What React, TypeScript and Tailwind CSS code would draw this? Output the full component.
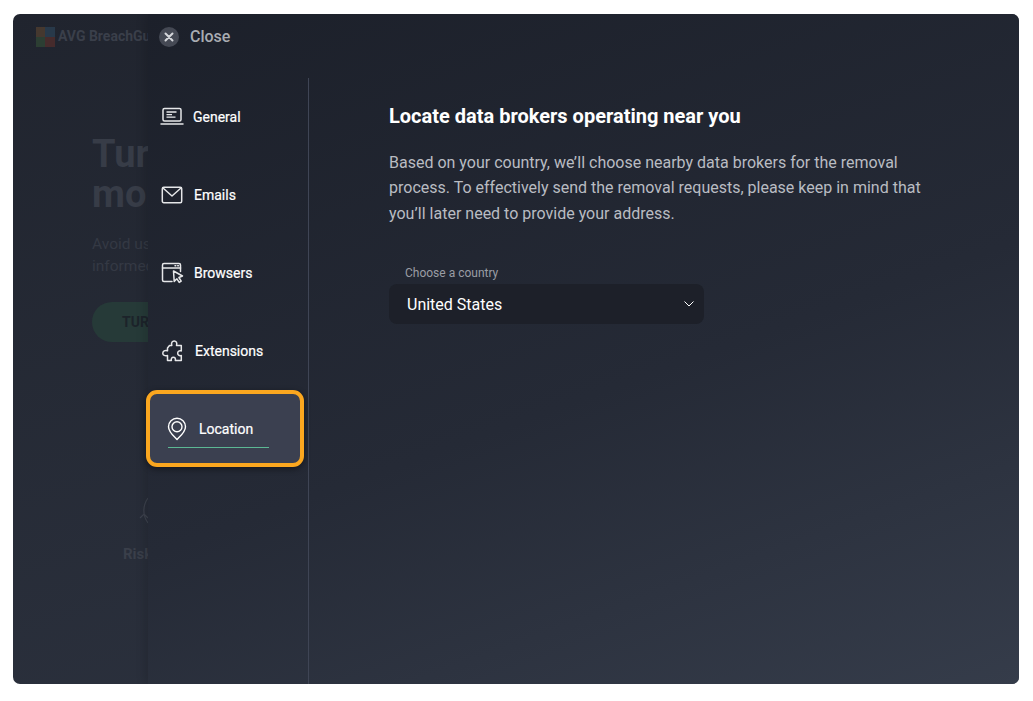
import React from "react";

const Ic = ({ children, w = 24, h = 24 }: { children: React.ReactNode; w?: number; h?: number }) => (
  <svg width={w} height={h} viewBox={`0 0 ${w} ${h}`} fill="none" stroke="currentColor" strokeWidth={1.5} strokeLinejoin="round" strokeLinecap="round">
    {children}
  </svg>
);

const items = [
  {
    label: "General",
    iconBox: "ml-[12px] w-[24px] mr-[9px]",
    icon: (
      <Ic>
        <rect x="3" y="3.500" width="18" height="12.500" rx="1.500" />
        <path d="M1 19h22" />
        <path d="M6.500 7h10M6.500 9.600h5.500M6.500 12.200h9" strokeWidth={1.300} strokeLinecap="butt" />
      </Ic>
    ),
  },
  {
    label: "Emails",
    iconBox: "ml-[12px] w-[24px] mr-[10px]",
    icon: (
      <Ic>
        <rect x="2.300" y="4.300" width="19.400" height="15.400" rx="1.500" />
        <path d="M3 5l9 8 9-8" />
      </Ic>
    ),
  },
  {
    label: "Browsers",
    iconBox: "ml-[12px] w-[24px] mr-[10px]",
    icon: (
      <Ic>
        <path d="M20.500 10.500V4a1.500 1.500 0 0 0-1.500-1.500H4A1.500 1.500 0 0 0 2.500 4v15A1.500 1.500 0 0 0 4 20.500h8" />
        <path d="M2.500 7h18" />
        <path d="M15 4.700h.8M17.700 4.700h.8" />
        <path d="M13.500 10l9 5-3.600 1.500 2.300 3.600-2 1.300-2.300-3.600-2.700 2.600z" />
      </Ic>
    ),
  },
  {
    label: "Extensions",
    iconBox: "ml-[13px] w-[24px] mr-[10px]",
    icon: (
      <Ic>
        <path d="M8.500 6.500h2.300c-.9-3 .6-4.600 2.400-4.600 1.900 0 3.200 1.800 2.300 4.600h4.800v5.400c-2.500-.7-3.600.8-3.600 2.300 0 1.600 1.200 2.900 3.600 2.300v5h-6c.6-2.200-.5-3.300-1.900-3.300-1.500 0-2.600 1.200-2 3.300H6.500v-5c-2.600.9-4.700-.4-4.700-2.300 0-2 2-3.200 4.700-2.400V9z" />
      </Ic>
    ),
  },
];

export default function App() {
  return (
    <div className="w-[1033px] h-[701px] bg-white pt-[14px] pl-[13px] overflow-hidden" style={{ fontFamily: "Roboto, sans-serif" }}>
      <div className="relative w-[1006px] h-[670px] rounded-[7px] overflow-hidden bg-[linear-gradient(165deg,#20242e,#2d3340)]">
        {/* dimmed page behind the drawer */}
        <div className="w-[135px] h-full">
          <div className="flex items-center pt-[1px] pl-[23px] gap-[3px] h-[44px]">
            <svg width="19" height="20" viewBox="0 0 19 20" className="shrink-0">
              <rect x="0" y="0" width="9" height="10" fill="#45382f" />
              <rect x="9" y="0" width="10" height="10" fill="#28394a" />
              <rect x="0" y="10" width="9" height="10" fill="#2c3e33" />
              <rect x="9" y="10" width="10" height="10" fill="#462b2c" />
            </svg>
            <span className="text-[14px] font-bold text-[#3a3f4a] whitespace-nowrap">AVG BreachGuard</span>
          </div>
          <div className="pl-[79px] pt-[76px] text-[38px] leading-[40px] font-bold text-[#373c47] whitespace-nowrap">
            <div>Turn on</div>
            <div>more</div>
          </div>
          <div className="pl-[79px] pt-[19px] text-[15.500px] leading-[22px] text-[#343944] whitespace-nowrap">
            <div>Avoid using</div>
            <div>informed</div>
          </div>
          <div className="ml-[79px] mt-[25px] w-[120px] h-[40px] rounded-full bg-[#263a38] pl-[30px] flex items-center text-[14px] font-bold text-[#1c232a] whitespace-nowrap">
            TURN ON
          </div>
          <div className="relative pl-[110px] pt-[201px] text-[15px] font-bold text-[#3a3f4a] whitespace-nowrap">
            Risk
            <svg width="14" height="28" viewBox="0 0 14 28" fill="none" stroke="#3d424d" strokeWidth="1.200" className="absolute left-[126px] top-[155px]">
              <path d="M9 1C4 8 3 18 9 26M1 21l4-4 4 4" />
            </svg>
          </div>
        </div>

        {/* drawer */}
        <div className="absolute left-[135px] top-0 right-0 bottom-0 flex flex-col bg-[linear-gradient(160deg,#1c202a,#252a36_55%,#353c4a)] shadow-[-4px_0_8px_rgba(0,0,0,0.12)]">
          <div className="h-[64px] flex items-center pl-[11px] gap-[11px] shrink-0 pb-[19px]">
            <div className="w-[20px] h-[20px] rounded-full bg-[#454954] flex items-center justify-center text-[#d5d7db]">
              <svg width="10" height="10" viewBox="0 0 10 10" stroke="currentColor" strokeWidth="2" strokeLinecap="round">
                <path d="M1.500 1.500l7 7M8.500 1.500l-7 7" />
              </svg>
            </div>
            <span className="text-[16px] font-medium text-[#a9acb2]">Close</span>
          </div>
          <div className="flex flex-1 min-h-0">
            <div className="w-[161px] border-r border-[#3f4555] shrink-0">
              {items.map((it) => (
                <div key={it.label} className="h-[78px] flex items-center text-white text-[14px] font-normal [-webkit-text-stroke:0.2px_white]">
                  <div className={it.iconBox + " shrink-0 flex items-center justify-center text-[#e6e7e9]"}>{it.icon}</div>
                  <span>{it.label}</span>
                </div>
              ))}
              <div className="relative ml-[-2px] w-[158px] h-[77px] rounded-[11px] border-[4px] border-[#fba71f] bg-[#3b4050] shadow-[0_2px_6px_rgba(0,0,0,0.45)] flex items-center pl-[17px] pt-[2px] text-white">
                <svg width="20" height="24" viewBox="0 0 20 24" fill="none" stroke="currentColor" strokeWidth="1.400" className="shrink-0 mt-[-2px]">
                  <path d="M10 22.500c-1-1.400-8.500-7-8.500-12.800a8.500 8.500 0 0 1 17 0c0 5.800-7.500 11.400-8.500 12.800z" strokeLinejoin="round" />
                  <circle cx="10" cy="9.800" r="5" />
                </svg>
                <span className="ml-[12px] text-[14px] [-webkit-text-stroke:0.2px_white]">Location</span>
                <div className="absolute left-[18px] bottom-[15px] w-[101px] h-px bg-[#5cb894]" />
              </div>
            </div>
            <div className="flex-1 pl-[80px] pt-[24px]">
              <h1 className="text-[20px] leading-[28px] font-bold text-white whitespace-nowrap">Locate data brokers operating near you</h1>
              <div className="mt-[20px] text-[16px] leading-[25.400px] text-[#b9bcc2] whitespace-nowrap">
                <p>Based on your country, we’ll choose nearby data brokers for the removal</p>
                <p>process. To effectively send the removal requests, please keep in mind that</p>
                <p>you’ll later need to provide your address.</p>
              </div>
              <div className="mt-[39px] pl-[16px] text-[12px] leading-[16px] text-[#9a9da4]">Choose a country</div>
              <div className="mt-[3px] w-[315px] h-[40px] rounded-[8px] bg-[#1d2029] flex items-center justify-between pl-[18px] pr-[10px] text-white text-[16px]">
                <span className="pt-[2px]">United States</span>
                <svg width="10" height="6" viewBox="0 0 10 6" fill="none" stroke="currentColor" strokeWidth="1">
                  <path d="M.5.500L5 5 9.500.500" />
                </svg>
              </div>
            </div>
          </div>
        </div>
      </div>
    </div>
  );
}
